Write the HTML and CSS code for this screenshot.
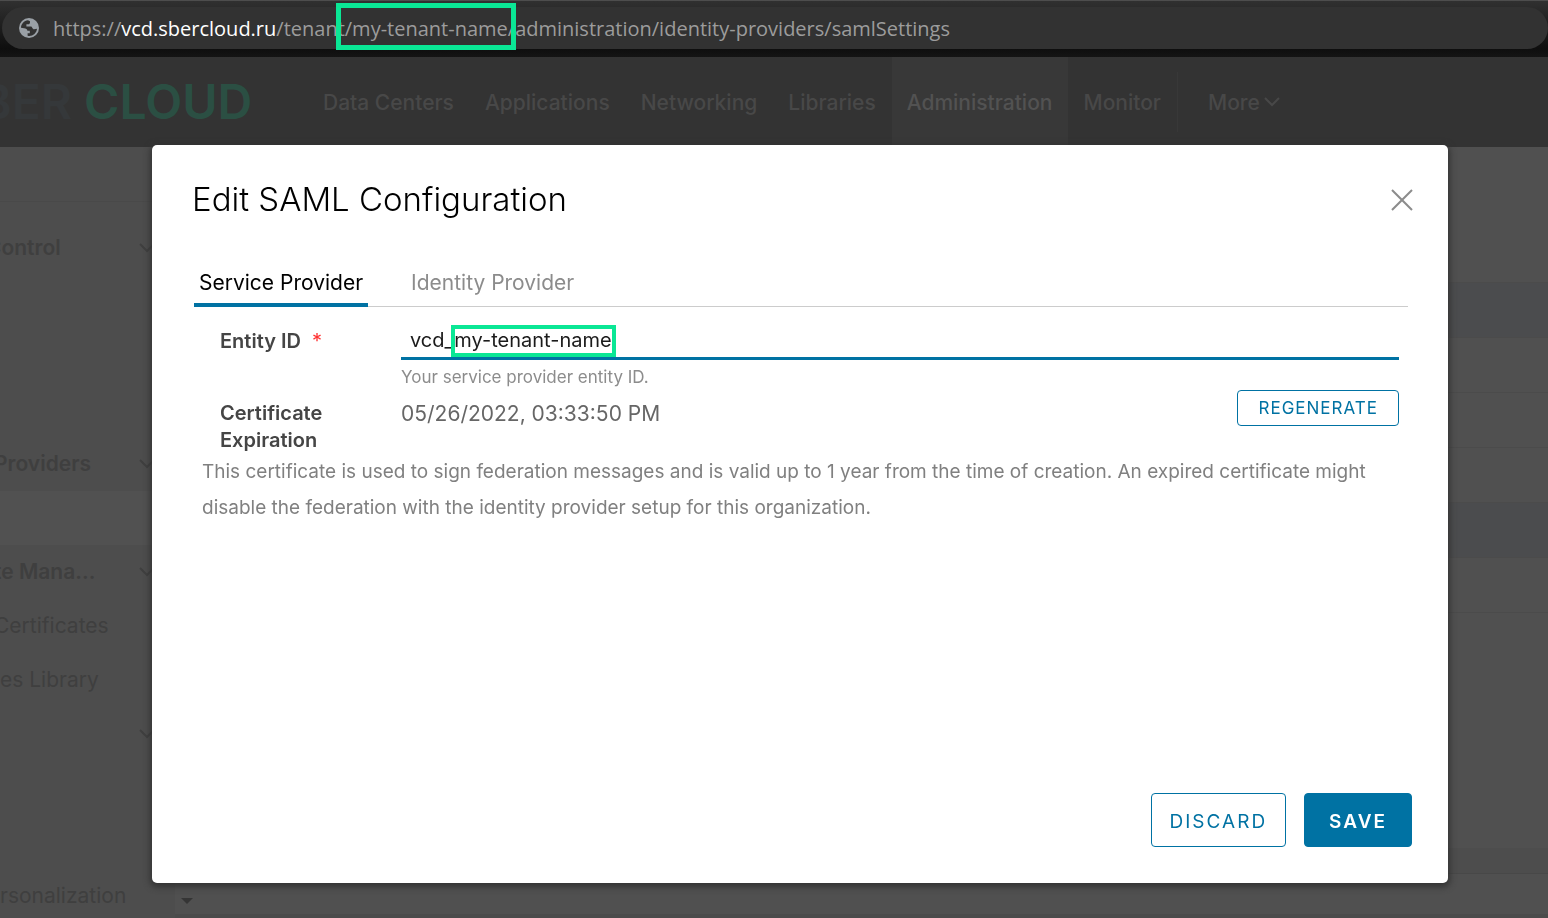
FILE: index.html
```html
<!DOCTYPE html>
<html lang="en">
<head>
<meta charset="utf-8">
<title>Edit SAML Configuration</title>
<link rel="stylesheet" href="styles.css">
</head>
<body>
<div class="browser-bar">
  <div class="address">
    <svg class="globe" viewBox="0 0 20 20" aria-hidden="true"><circle cx="10" cy="10" r="10" fill="#9aa0a6"/><path d="M9 2.2C5 2.6 2 6 2 9.8l3 .4c2 0 3.400 1 3.400 2.600h2.400v2.400H8.600v2.600c4.500 1 9-2.200 9.400-7l-3 .4c-1.600 0-1.600-2.800-3.200-2.800H7.400V6.200h1.800c1.200 0 1.800-1 1.800-1.800V3.200L9 2.200z" fill="#323232"/></svg>
    <span class="url">https://<span class="url-host">vcd.sbercloud.ru</span>/tenant<span class="url-mark">/my-tenant-name/</span>administration/identity-providers/samlSettings</span>
  </div>
</div>
<header class="header">
  <div class="logo"><span class="logo-first">BER</span> <span class="logo-second">CLOUD</span></div>
  <nav class="nav">
    <a href="#">Data Centers</a>
    <a href="#">Applications</a>
    <a href="#">Networking</a>
    <a href="#">Libraries</a>
    <a href="#" class="active">Administration</a>
    <a href="#">Monitor</a>
    <button type="button" class="more">More<svg class="chevron" viewBox="0 0 16 10" aria-hidden="true"><path d="M1 1l7 7 7-7"/></svg></button>
  </nav>
</header>
<div class="workspace">
  <aside class="sidebar">
    <div class="sidebar-top"></div>
    <ul class="menu">
      <li class="group cut-wide"><span>Control</span><svg class="chevron" viewBox="0 0 16 10" aria-hidden="true"><path d="M1 1l7 7 7-7"/></svg></li>
      <li></li><li></li><li></li>
      <li class="group cut"><span>Providers</span><svg class="chevron" viewBox="0 0 16 10" aria-hidden="true"><path d="M1 1l7 7 7-7"/></svg></li>
      <li class="selected"></li>
      <li class="group cut"><span>te Mana...</span><svg class="chevron" viewBox="0 0 16 10" aria-hidden="true"><path d="M1 1l7 7 7-7"/></svg></li>
      <li class="cut">Certificates</li>
      <li>es Library</li>
      <li class="group"><span></span><svg class="chevron" viewBox="0 0 16 10" aria-hidden="true"><path d="M1 1l7 7 7-7"/></svg></li>
      <li></li><li></li>
      <li>rsonalization</li>
    </ul>
  </aside>
  <main class="content">
    <div class="rows">
      <div class="row band"></div>
      <div class="row"></div>
      <div class="row"></div>
      <div class="row"></div>
      <div class="row band"></div>
      <div class="row"></div>
      <div class="row"></div>
    </div>
    <div class="tasks-edge"></div>
    <div class="tasks"><svg class="caret" viewBox="0 0 12 6" aria-hidden="true"><path d="M0 0h12L6 6z"/></svg></div>
  </main>
</div>
<div class="overlay">
  <form class="dialog" role="dialog" aria-labelledby="dialog-title">
    <div class="dialog-head">
      <h1 id="dialog-title">Edit SAML Configuration</h1>
      <button type="button" class="close" aria-label="Close"><svg viewBox="0 0 20 20" aria-hidden="true"><path d="M0 0l20 20M20 0L0 20"/></svg></button>
    </div>
    <div class="tabs" role="tablist">
      <button type="button" role="tab" class="tab tab-active" aria-selected="true">Service Provider</button>
      <button type="button" role="tab" class="tab" aria-selected="false">Identity Provider</button>
    </div>
    <div class="field">
      <label for="entity">Entity ID <span class="required">*</span></label>
      <div class="control">
        <input id="entity" type="text" value="vcd_my-tenant-name">
        <span class="input-mark"></span>
        <span class="help">Your service provider entity ID.</span>
      </div>
    </div>
    <div class="field">
      <div class="label">Certificate Expiration</div>
      <div class="control expiry">
        <span>05/26/2022, 03:33:50 PM</span>
        <button type="button" class="button button-small">REGENERATE</button>
      </div>
    </div>
    <p class="note">This certificate is used to sign federation messages and is valid up to 1 year from the time of creation. An expired certificate might disable the federation with the identity provider setup for this organization.</p>
    <div class="actions">
      <button type="button" class="button">DISCARD</button>
      <button type="submit" class="button button-primary">SAVE</button>
    </div>
  </form>
</div>
</body>
</html>
```
FILE: styles.css
```css
* { box-sizing: border-box; }
body {
  margin: 0;
  height: 100vh;
  overflow: hidden;
  display: flex;
  flex-direction: column;
  font-family: Inter, sans-serif;
  font-size: 21px;
  background: #505050;
}
button, input { font: inherit; }
svg { display: block; overflow: visible; }

.browser-bar {
  height: 57px;
  flex: none;
  padding: 6px 0 8px 2px;
  border-top: 1px solid #4d4d4d;
  background: linear-gradient(#303030, #0e0e0e 85%, #141414);
}
.address {
  height: 42px;
  display: flex;
  align-items: center;
  gap: 14px;
  padding-left: 17px;
  border-radius: 21px;
  background: #323232;
}
.globe { width: 20px; height: 20px; flex: none; }
.url {
  font-family: "Open Sans", sans-serif;
  font-size: 20px;
  color: #9c9c9c;
  white-space: nowrap;
}
.url-host { color: #fff; }
.url-mark { position: relative; }
.url-mark::after {
  content: "";
  position: absolute;
  inset: -12px -1px -8px -9px;
  border: 5px solid #0ae795;
}

.header {
  height: 90px;
  flex: none;
  display: flex;
  background: #333;
}
.logo {
  width: 328px;
  flex: none;
  margin-left: -20px;
  font-size: 48px;
  font-weight: 600;
  line-height: 90px;
  white-space: nowrap;
}
.logo-first { color: #35383a; }
.logo-second { color: #2b4f43; }
.nav { display: flex; }
.nav a, .more {
  display: flex;
  align-items: center;
  padding: 0 16px 0 15px;
  color: #484848;
  font-weight: 500;
  text-decoration: none;
}
.nav .active { color: #525252; background: #383838; }
.more {
  gap: 4px;
  margin: 15px 0;
  padding-left: 30px;
  border: 0;
  border-left: 1px solid #383838;
  background: none;
}
.chevron { width: 16px; height: 10px; flex: none; fill: none; stroke: currentColor; stroke-width: 2; }

.workspace { flex: 1; min-height: 0; display: flex; }
.sidebar { width: 175px; flex: none; background: #4d4d4d; color: #3f3f3f; }
.sidebar-top { height: 55px; border-bottom: 1px solid #494949; }
.menu { list-style: none; margin: 0; padding: 19px 0 0; }
.menu li { height: 54px; line-height: 54px; white-space: nowrap; }
.menu .group { display: flex; align-items: center; justify-content: space-between; padding-right: 20px; font-weight: 600; }
.menu .cut { margin-left: -6px; }
.menu .cut-wide { margin-left: -14px; }
.menu .selected { background: #515151; }
.content { flex: 1; display: flex; flex-direction: column; }
.rows { flex: 1; padding-top: 135px; }
.row { height: 55px; border-top: 1px solid #4b4b4b; }
.band { background: #4b4c4e; }
.tasks-edge { height: 26px; border-bottom: 1px solid #484848; background: #4d4d4d; }
.tasks { height: 44px; padding: 24px 6px 0; border-bottom: 4px solid #4b4b4b; }
.caret { width: 12px; height: 6px; fill: #353535; }

.overlay { position: fixed; inset: 0; padding: 145px 100px 35px 152px; display: flex; }
.dialog {
  flex: 1;
  display: flex;
  flex-direction: column;
  padding: 32px 36px 36px 40px;
  border-radius: 5px;
  background: #fff;
  box-shadow: 0 2px 6px 2px #333;
}
.dialog-head { display: flex; justify-content: space-between; align-items: center; }
h1 { margin: 0; font-size: 33px; line-height: 45px; font-weight: 300; color: #000; }
.close { padding: 0; border: 0; background: none; }
.close svg { width: 20px; height: 20px; stroke: #8c8c8c; stroke-width: 2; }
.tabs {
  display: flex;
  gap: 38px;
  margin: 35px 4px 0 2px;
  height: 50px;
  box-shadow: inset 0 -1px #ccc;
}
.tab { padding: 0 5px; border: 0; background: none; color: #8c8c8c; }
.tab-active { color: #000; box-shadow: inset 0 -4px #0072a3; }
.field { display: flex; padding: 0 13px 0 28px; }
.field label, .label { width: 181px; flex: none; font-size: 20px; font-weight: 600; color: #454545; line-height: 27px; }
.field label { padding-top: 21px; }
.label { padding: 9px 60px 0 0; }
.required { margin-left: 6px; color: #f33; font-weight: 400; }
.control { flex: 1; position: relative; display: flex; flex-direction: column; }
.control input {
  height: 42px;
  margin-top: 11px;
  padding: 4px 9px 0;
  border: 0;
  border-bottom: 3px solid #0072a3;
  outline: 0;
  background: none;
  color: #1b1b1b;
  font-size: 20px;
}
.input-mark { position: absolute; left: 50px; top: 18px; width: 165px; height: 32px; border: 4px solid #0ae795; }
.help { font-size: 17px; line-height: 31px; padding-top: 2px; height: 30px; color: #8c8c8c; }
.expiry { flex-direction: row; justify-content: space-between; align-items: flex-start; color: #666; line-height: 48px; }
.label { padding-top: 10px; }
.note { margin: 0 10px; font-size: 19px; line-height: 36px; color: #808080; }
.button {
  height: 54px;
  padding: 2px 18px 0;
  border: 1px solid #0072a3;
  border-radius: 4px;
  background: #fff;
  color: #0072a3;
  font-size: 19px;
  letter-spacing: 2px;
}
.button-small { height: 36px; padding: 0 20px; font-size: 17px; letter-spacing: 1px; line-height: 1; }
.button-primary { padding: 2px 24px 0; background: #0072a3; color: #fff; font-weight: 600; }
.actions { display: flex; justify-content: flex-end; gap: 18px; margin-top: auto; }
```
